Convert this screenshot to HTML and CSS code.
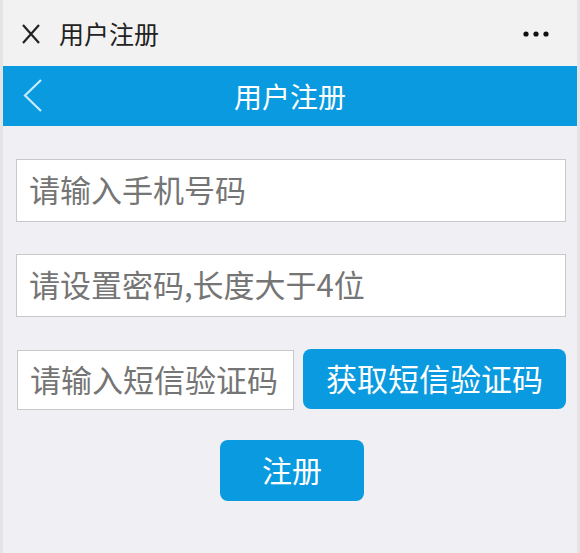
FILE: index.html
```html
<!DOCTYPE html>
<html lang="zh-CN">
<head>
  <meta charset="UTF-8">
  <title>用户注册</title>
  <link rel="stylesheet" href="styles.css">
</head>
<body>

<div class="app">
  <div class="topbar">
    <svg class="close" width="18" height="20" viewBox="0 0 18 20">
      <path d="M1 1 L17 19 M17 1 L1 19" stroke="#222" stroke-width="2.2" fill="none"/>
    </svg>
    <span class="topbar-title">用户注册</span>
    <svg class="more" width="28" height="6" viewBox="0 0 28 6">
      <circle cx="3" cy="3" r="2.6" fill="#111"/>
      <circle cx="13" cy="3" r="2.6" fill="#111"/>
      <circle cx="23" cy="3" r="2.6" fill="#111"/>
    </svg>
  </div>

  <div class="navbar">
    <svg class="back" width="20" height="34" viewBox="0 0 20 34">
      <polyline points="18,1 2,16.5 18,32" stroke="#c8ecff" stroke-width="2.2" fill="none"/>
    </svg>
    <h1>用户注册</h1>
  </div>

  <form class="form">
    <input class="field" type="tel" placeholder="请输入手机号码">
    <input class="field" type="password" placeholder="请设置密码,长度大于4位">
    <div class="code-row">
      <input class="field code" type="text" placeholder="请输入短信验证码">
      <button type="button" class="btn get-code">获取短信验证码</button>
    </div>
    <button type="button" class="btn submit">注册</button>
  </form>
</div>

</body>
</html>
```

FILE: styles.css
```css
* {
  box-sizing: border-box;
}
body {
  margin: 0;
  font-family: "Noto Sans CJK SC", "Noto Sans", sans-serif;
  background: #e4e4e6;
}
.app {
  margin: 0 3px;
  min-height: 553px;
  background: #efeff4;
}
.topbar {
  height: 66px;
  background: #f2f2f2;
  display: flex;
  align-items: center;
  padding: 0 26px 0 19px;
}
.close {
  margin-top: 1px;
}
.topbar-title {
  margin-left: 19px;
  font-size: 25px;
  color: #222;
  flex: 1;
}
.more {
  margin-top: 2px;
}
.navbar {
  height: 60px;
  background: #0a9ae0;
  display: flex;
  align-items: center;
  position: relative;
  padding-left: 20px;
}
.navbar h1 {
  position: absolute;
  left: 0;
  right: 0;
  margin: 0;
  text-align: center;
  font-size: 28px;
  font-weight: normal;
  color: #fff;
  pointer-events: none;
}
.form {
  padding: 33px 11px 0 13px;
  display: flex;
  flex-direction: column;
}
.field {
  height: 63px;
  border: 1px solid #c9c9c9;
  background: #fff;
  padding: 0 0 4px 12px;
  font-family: inherit;
  font-size: 31px;
  color: #333;
  margin-bottom: 32px;
  outline: none;
}
.field::placeholder {
  color: #757575;
}
.code-row {
  display: flex;
  align-items: flex-start;
  gap: 9px;
  margin-bottom: 30px;
}
.field.code {
  width: 277px;
  height: 60px;
  margin: 1px 0 0 1px;
  padding-right: 0;
}
.btn {
  border: none;
  background: #0a9ae0;
  color: #fff;
  font-family: inherit;
  font-size: 31px;
  border-radius: 8px;
  cursor: pointer;
  padding: 0 0 4px;
}
.get-code {
  flex: 1;
  height: 60px;
}
.submit {
  align-self: center;
  width: 144px;
  height: 61px;
  margin-left: 2px;
  font-size: 30px;
}
```
